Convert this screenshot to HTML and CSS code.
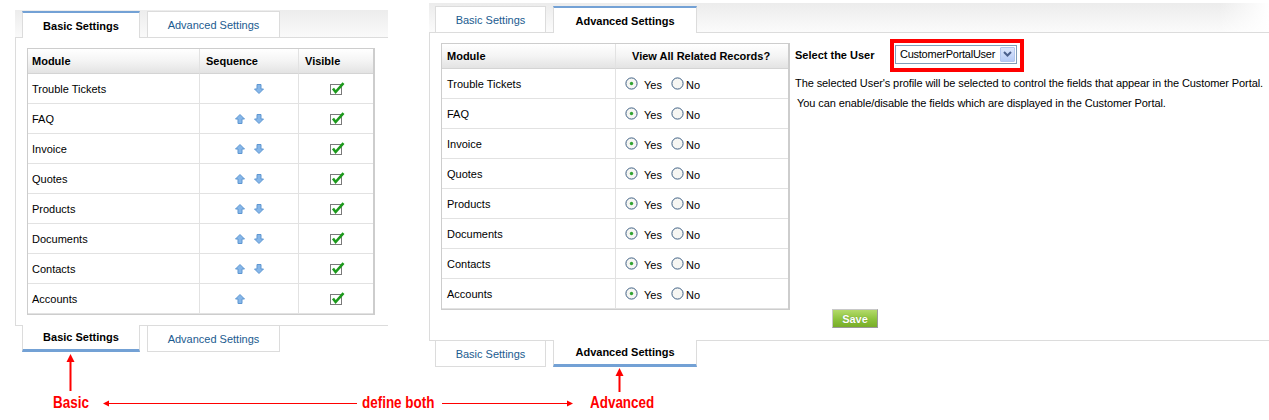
FILE: index.html
```html
<!DOCTYPE html>
<html lang="en">
<head>
<meta charset="utf-8">
<title>Customer Portal Settings</title>
<link rel="stylesheet" href="styles.css">
</head>
<body>
<div class="page">
  <div class="modules">
    <!-- BASIC -->
    <section class="module module-basic">
      <div class="tabbar tabbar-basic">
        <div class="tab tab-on w118">Basic Settings</div>
        <div class="tab w133">Advanced Settings</div>
      </div>
      <div class="panel panel-basic">
        <div class="tbl tbl-basic">
          <div class="cell hcell">Module</div>
          <div class="cell hcell pad6">Sequence</div>
          <div class="cell hcell pad6 last">Visible</div>

          <div class="cell">Trouble Tickets</div>
          <div class="cell seq"><span class="ph"></span><svg class="arr" width="10" height="10" viewBox="0 0 10 10"><path d="M3 0.5H7V5H9.5L5 9.5L0.5 5H3Z" fill="#86b6e8" stroke="#5f97d2"/></svg></div>
          <div class="cell vis last"><svg width="15" height="13" viewBox="0 0 15 13"><rect x="0.5" y="2.5" width="11" height="10" fill="#fff" stroke="#7a7a7a"/><path d="M3 6.5L5.6 10L13.5 1.2" fill="none" stroke="#1c9a1c" stroke-width="2.6"/></svg></div>

          <div class="cell">FAQ</div>
          <div class="cell seq"><svg class="arr" width="10" height="10" viewBox="0 0 10 10"><path d="M3 9.5H7V5H9.5L5 0.5L0.5 5H3Z" fill="#86b6e8" stroke="#5f97d2"/></svg><svg class="arr" width="10" height="10" viewBox="0 0 10 10"><path d="M3 0.5H7V5H9.5L5 9.5L0.5 5H3Z" fill="#86b6e8" stroke="#5f97d2"/></svg></div>
          <div class="cell vis last"><svg width="15" height="13" viewBox="0 0 15 13"><rect x="0.5" y="2.5" width="11" height="10" fill="#fff" stroke="#7a7a7a"/><path d="M3 6.5L5.6 10L13.5 1.2" fill="none" stroke="#1c9a1c" stroke-width="2.6"/></svg></div>

          <div class="cell">Invoice</div>
          <div class="cell seq"><svg class="arr" width="10" height="10" viewBox="0 0 10 10"><path d="M3 9.5H7V5H9.5L5 0.5L0.5 5H3Z" fill="#86b6e8" stroke="#5f97d2"/></svg><svg class="arr" width="10" height="10" viewBox="0 0 10 10"><path d="M3 0.5H7V5H9.5L5 9.5L0.5 5H3Z" fill="#86b6e8" stroke="#5f97d2"/></svg></div>
          <div class="cell vis last"><svg width="15" height="13" viewBox="0 0 15 13"><rect x="0.5" y="2.5" width="11" height="10" fill="#fff" stroke="#7a7a7a"/><path d="M3 6.5L5.6 10L13.5 1.2" fill="none" stroke="#1c9a1c" stroke-width="2.6"/></svg></div>

          <div class="cell">Quotes</div>
          <div class="cell seq"><svg class="arr" width="10" height="10" viewBox="0 0 10 10"><path d="M3 9.5H7V5H9.5L5 0.5L0.5 5H3Z" fill="#86b6e8" stroke="#5f97d2"/></svg><svg class="arr" width="10" height="10" viewBox="0 0 10 10"><path d="M3 0.5H7V5H9.5L5 9.5L0.5 5H3Z" fill="#86b6e8" stroke="#5f97d2"/></svg></div>
          <div class="cell vis last"><svg width="15" height="13" viewBox="0 0 15 13"><rect x="0.5" y="2.5" width="11" height="10" fill="#fff" stroke="#7a7a7a"/><path d="M3 6.5L5.6 10L13.5 1.2" fill="none" stroke="#1c9a1c" stroke-width="2.6"/></svg></div>

          <div class="cell">Products</div>
          <div class="cell seq"><svg class="arr" width="10" height="10" viewBox="0 0 10 10"><path d="M3 9.5H7V5H9.5L5 0.5L0.5 5H3Z" fill="#86b6e8" stroke="#5f97d2"/></svg><svg class="arr" width="10" height="10" viewBox="0 0 10 10"><path d="M3 0.5H7V5H9.5L5 9.5L0.5 5H3Z" fill="#86b6e8" stroke="#5f97d2"/></svg></div>
          <div class="cell vis last"><svg width="15" height="13" viewBox="0 0 15 13"><rect x="0.5" y="2.5" width="11" height="10" fill="#fff" stroke="#7a7a7a"/><path d="M3 6.5L5.6 10L13.5 1.2" fill="none" stroke="#1c9a1c" stroke-width="2.6"/></svg></div>

          <div class="cell">Documents</div>
          <div class="cell seq"><svg class="arr" width="10" height="10" viewBox="0 0 10 10"><path d="M3 9.5H7V5H9.5L5 0.5L0.5 5H3Z" fill="#86b6e8" stroke="#5f97d2"/></svg><svg class="arr" width="10" height="10" viewBox="0 0 10 10"><path d="M3 0.5H7V5H9.5L5 9.5L0.5 5H3Z" fill="#86b6e8" stroke="#5f97d2"/></svg></div>
          <div class="cell vis last"><svg width="15" height="13" viewBox="0 0 15 13"><rect x="0.5" y="2.5" width="11" height="10" fill="#fff" stroke="#7a7a7a"/><path d="M3 6.5L5.6 10L13.5 1.2" fill="none" stroke="#1c9a1c" stroke-width="2.6"/></svg></div>

          <div class="cell">Contacts</div>
          <div class="cell seq"><svg class="arr" width="10" height="10" viewBox="0 0 10 10"><path d="M3 9.5H7V5H9.5L5 0.5L0.5 5H3Z" fill="#86b6e8" stroke="#5f97d2"/></svg><svg class="arr" width="10" height="10" viewBox="0 0 10 10"><path d="M3 0.5H7V5H9.5L5 9.5L0.5 5H3Z" fill="#86b6e8" stroke="#5f97d2"/></svg></div>
          <div class="cell vis last"><svg width="15" height="13" viewBox="0 0 15 13"><rect x="0.5" y="2.5" width="11" height="10" fill="#fff" stroke="#7a7a7a"/><path d="M3 6.5L5.6 10L13.5 1.2" fill="none" stroke="#1c9a1c" stroke-width="2.6"/></svg></div>

          <div class="cell">Accounts</div>
          <div class="cell seq"><svg class="arr" width="10" height="10" viewBox="0 0 10 10"><path d="M3 9.5H7V5H9.5L5 0.5L0.5 5H3Z" fill="#86b6e8" stroke="#5f97d2"/></svg></div>
          <div class="cell vis last"><svg width="15" height="13" viewBox="0 0 15 13"><rect x="0.5" y="2.5" width="11" height="10" fill="#fff" stroke="#7a7a7a"/><path d="M3 6.5L5.6 10L13.5 1.2" fill="none" stroke="#1c9a1c" stroke-width="2.6"/></svg></div>
        </div>
      </div>
      <div class="tabbar-foot">
        <div class="tab tab-on w118">Basic Settings</div>
        <div class="tab w133">Advanced Settings</div>
      </div>
      <svg class="pointer pointer-basic" width="9" height="37" viewBox="0 0 9 37"><path d="M4.5 0L8.5 8H0.5Z" fill="#f00"/><rect x="3.5" y="7" width="2" height="30" fill="#f00"/></svg>
    </section>

    <!-- ADVANCED -->
    <section class="module module-adv">
      <div class="tabbar tabbar-adv">
        <div class="tab w111">Basic Settings</div>
        <div class="tab tab-on w144">Advanced Settings</div>
      </div>
      <div class="panel panel-adv">
        <div class="tbl tbl-adv">
          <div class="cell hcell pad5">Module</div>
          <div class="cell hcell pad16 last">View All Related Records?</div>

          <div class="cell pad5">Trouble Tickets</div>
          <div class="cell opts last"><svg class="radio" width="13" height="13" viewBox="0 0 13 13"><circle cx="6.5" cy="6.5" r="5.6" fill="#f6f6f3" stroke="#3e5f83"/><circle cx="6.5" cy="6.5" r="1.7" fill="#32a332"/></svg><span class="yes">Yes</span><svg class="radio" width="13" height="13" viewBox="0 0 13 13"><circle cx="6.5" cy="6.5" r="5.6" fill="#f6f6f3" stroke="#3e5f83"/></svg><span class="no">No</span></div>

          <div class="cell pad5">FAQ</div>
          <div class="cell opts last"><svg class="radio" width="13" height="13" viewBox="0 0 13 13"><circle cx="6.5" cy="6.5" r="5.6" fill="#f6f6f3" stroke="#3e5f83"/><circle cx="6.5" cy="6.5" r="1.7" fill="#32a332"/></svg><span class="yes">Yes</span><svg class="radio" width="13" height="13" viewBox="0 0 13 13"><circle cx="6.5" cy="6.5" r="5.6" fill="#f6f6f3" stroke="#3e5f83"/></svg><span class="no">No</span></div>

          <div class="cell pad5">Invoice</div>
          <div class="cell opts last"><svg class="radio" width="13" height="13" viewBox="0 0 13 13"><circle cx="6.5" cy="6.5" r="5.6" fill="#f6f6f3" stroke="#3e5f83"/><circle cx="6.5" cy="6.5" r="1.7" fill="#32a332"/></svg><span class="yes">Yes</span><svg class="radio" width="13" height="13" viewBox="0 0 13 13"><circle cx="6.5" cy="6.5" r="5.6" fill="#f6f6f3" stroke="#3e5f83"/></svg><span class="no">No</span></div>

          <div class="cell pad5">Quotes</div>
          <div class="cell opts last"><svg class="radio" width="13" height="13" viewBox="0 0 13 13"><circle cx="6.5" cy="6.5" r="5.6" fill="#f6f6f3" stroke="#3e5f83"/><circle cx="6.5" cy="6.5" r="1.7" fill="#32a332"/></svg><span class="yes">Yes</span><svg class="radio" width="13" height="13" viewBox="0 0 13 13"><circle cx="6.5" cy="6.5" r="5.6" fill="#f6f6f3" stroke="#3e5f83"/></svg><span class="no">No</span></div>

          <div class="cell pad5">Products</div>
          <div class="cell opts last"><svg class="radio" width="13" height="13" viewBox="0 0 13 13"><circle cx="6.5" cy="6.5" r="5.6" fill="#f6f6f3" stroke="#3e5f83"/><circle cx="6.5" cy="6.5" r="1.7" fill="#32a332"/></svg><span class="yes">Yes</span><svg class="radio" width="13" height="13" viewBox="0 0 13 13"><circle cx="6.5" cy="6.5" r="5.6" fill="#f6f6f3" stroke="#3e5f83"/></svg><span class="no">No</span></div>

          <div class="cell pad5">Documents</div>
          <div class="cell opts last"><svg class="radio" width="13" height="13" viewBox="0 0 13 13"><circle cx="6.5" cy="6.5" r="5.6" fill="#f6f6f3" stroke="#3e5f83"/><circle cx="6.5" cy="6.5" r="1.7" fill="#32a332"/></svg><span class="yes">Yes</span><svg class="radio" width="13" height="13" viewBox="0 0 13 13"><circle cx="6.5" cy="6.5" r="5.6" fill="#f6f6f3" stroke="#3e5f83"/></svg><span class="no">No</span></div>

          <div class="cell pad5">Contacts</div>
          <div class="cell opts last"><svg class="radio" width="13" height="13" viewBox="0 0 13 13"><circle cx="6.5" cy="6.5" r="5.6" fill="#f6f6f3" stroke="#3e5f83"/><circle cx="6.5" cy="6.5" r="1.7" fill="#32a332"/></svg><span class="yes">Yes</span><svg class="radio" width="13" height="13" viewBox="0 0 13 13"><circle cx="6.5" cy="6.5" r="5.6" fill="#f6f6f3" stroke="#3e5f83"/></svg><span class="no">No</span></div>

          <div class="cell pad5">Accounts</div>
          <div class="cell opts last"><svg class="radio" width="13" height="13" viewBox="0 0 13 13"><circle cx="6.5" cy="6.5" r="5.6" fill="#f6f6f3" stroke="#3e5f83"/><circle cx="6.5" cy="6.5" r="1.7" fill="#32a332"/></svg><span class="yes">Yes</span><svg class="radio" width="13" height="13" viewBox="0 0 13 13"><circle cx="6.5" cy="6.5" r="5.6" fill="#f6f6f3" stroke="#3e5f83"/></svg><span class="no">No</span></div>
        </div>

        <div class="side">
          <div class="userrow">
            <span class="userlabel">Select the User</span>
            <div class="userbox">
              <div class="select">
                <span class="seltext">CustomerPortalUser</span>
                <span class="dropbtn"><svg width="9" height="6" viewBox="0 0 9 6"><path d="M1 1L4.5 4.5L8 1" fill="none" stroke="#4a5f8c" stroke-width="2"/></svg></span>
              </div>
            </div>
          </div>
          <p class="desc">The selected User's profile will be selected to control the fields that appear in the Customer Portal.</p>
          <p class="desc desc2">You can enable/disable the fields which are displayed in the Customer Portal.</p>
          <button class="save" type="button">Save</button>
        </div>
      </div>
      <div class="tabbar-foot tabbar-foot-adv">
        <div class="tab w111">Basic Settings</div>
        <div class="tab tab-on w144">Advanced Settings</div>
      </div>
      <svg class="pointer pointer-adv" width="9" height="24" viewBox="0 0 9 24"><path d="M4.5 0L8.5 8H0.5Z" fill="#f00"/><rect x="3.5" y="7" width="2" height="17" fill="#f00"/></svg>
    </section>
  </div>

  <div class="legend">
    <span class="lbl lbl-basic">Basic</span>
    <svg class="rule rule-l" width="254" height="7" viewBox="0 0 254 7"><path d="M0 3.5L6 0.5V6.5Z" fill="#f00"/><rect x="5" y="3" width="249" height="1" fill="#f00"/></svg>
    <span class="lbl lbl-both">define both</span>
    <svg class="rule rule-r" width="131" height="7" viewBox="0 0 131 7"><rect x="0" y="3" width="126" height="1" fill="#f00"/><path d="M131 3.5L125 0.5V6.5Z" fill="#f00"/></svg>
    <span class="lbl lbl-adv">Advanced</span>
  </div>
</div>
</body>
</html>
```

FILE: styles.css
```css
* { box-sizing: border-box; }

body {
  margin: 0;
  background: #fff;
  color: #000;
  font: 11px "Liberation Sans", Arial, sans-serif;
}

.page {
  width: 1269px;
  display: flex;
  flex-direction: column;
}

.modules {
  display: flex;
  align-items: flex-start;
}

.module-basic {
  margin-left: 15px;
  width: 373px;
}

.module-adv {
  margin-left: 41px;
  flex: 1;
}

/* ---------- tabs ---------- */
.tabbar {
  display: flex;
  align-items: flex-end;
  gap: 7px;
  border-bottom: 1px solid #dcdcdc;
}

.tabbar-basic {
  padding: 11px 0 0 7px;
  background: linear-gradient(to bottom, #fff 0, #fff 10px, #ececec 10px, #fafafa 37px);
}

.tabbar-adv {
  padding: 6px 0 0 6px;
  background:
    linear-gradient(to right, rgba(255,255,255,0) 94%, #fff 100%),
    linear-gradient(to bottom, #fff 0, #fff 3px, #ececec 3px, #fbfbfb 32px);
}

.tab {
  height: 26px;
  display: flex;
  align-items: center;
  justify-content: center;
  background: #fff;
  border: 1px solid #dcdcdc;
  color: #1b5b8f;
  white-space: nowrap;
}

.tabbar .tab { border-bottom: 0; }

.tab-on {
  color: #000;
  font-weight: bold;
}

.tabbar .tab-on {
  height: 27px;
  margin-bottom: -1px;
  border-top: 2px solid #73a1d5;
}

.w118 { width: 118px; }
.w133 { width: 133px; }
.w111 { width: 111px; }
.w144 { width: 144px; }

.tabbar-foot {
  display: flex;
  align-items: flex-start;
  gap: 7px;
  padding-left: 7px;
}

.tabbar-foot-adv { padding-left: 6px; }

.tabbar-foot .tab {
  border-top: 0;
  height: 26px;
}

.tabbar-foot .tab-on {
  height: 27px;
  margin-top: -1px;
  border-bottom: 3px solid #73a1d5;
}

/* ---------- panels ---------- */
.panel {
  border-left: 1px solid #dcdcdc;
  border-bottom: 1px solid #dcdcdc;
}

.panel-basic { padding: 10px 0 10px 11px; }

.panel-adv {
  padding: 10px 0 12px 11px;
  display: flex;
  align-items: flex-start;
}

/* ---------- tables ---------- */
.tbl {
  display: grid;
  border: 1px solid #cdcdcd;
  border-right-width: 2px;
}

.tbl-basic {
  width: 348px;
  grid-template-columns: 172px 99px 74px;
}

.tbl-adv {
  width: 349px;
  grid-template-columns: 174px 172px;
}

.cell {
  height: 30px;
  display: flex;
  align-items: center;
  padding-left: 4px;
  border-right: 1px solid #e2e2e2;
  border-bottom: 1px solid #e2e2e2;
  white-space: nowrap;
}

.cell.last { border-right: 0; }

.hcell {
  height: 25px;
  font-weight: bold;
  background: linear-gradient(to bottom, #ffffff 0%, #f4f4f4 50%, #e3e3e3 100%);
  border-bottom-color: #d4d4d4;
}

.pad5 { padding-left: 5px; }
.pad6 { padding-left: 6px; }
.pad16 { padding-left: 16px; }

.seq {
  padding-left: 35px;
  gap: 9px;
}

.ph {
  width: 10px;
  height: 10px;
}

.arr { display: block; }

.vis { padding-left: 31px; padding-bottom: 1px; }
.vis svg { display: block; }

.opts { padding-left: 9px; }
.radio { display: block; flex: none; }
.yes { margin-left: 6px; margin-right: 9px; padding-top: 3px; }
.no { margin-left: 2px; padding-top: 3px; }

/* ---------- side ---------- */
.side {
  margin-left: 5px;
  margin-top: -5px;
  height: 290px;
  display: flex;
  flex-direction: column;
  flex: 1;
}

.userrow {
  display: flex;
  align-items: center;
  height: 34px;
}

.userlabel {
  width: 95px;
  font-weight: bold;
}

.userbox {
  border: 4px solid #f00;
  padding: 2px 3px 4px 1px;
}

.select {
  width: 122px;
  height: 19px;
  border: 1px solid #7f9db9;
  background: #fff;
  display: flex;
  align-items: center;
  justify-content: space-between;
  padding: 0 1px 0 4px;
}

.seltext { letter-spacing: -0.25px; }

.dropbtn {
  width: 15px;
  height: 15px;
  display: flex;
  align-items: center;
  justify-content: center;
  background: linear-gradient(to bottom, #dbe6fc 0%, #b6cbf6 100%);
  border: 1px solid #b2c6ee;
  border-radius: 1px;
}

.desc {
  margin: 4px 0 0;
  line-height: 14px;
  white-space: nowrap;
  letter-spacing: -0.09px;
}

.desc2 {
  margin-top: 6px;
  padding-left: 2px;
}

.save {
  margin-top: auto;
  margin-left: 37px;
  width: 46px;
  height: 19px;
  padding: 0;
  font: bold 11px "Liberation Sans", Arial, sans-serif;
  color: #fff;
  text-shadow: 0 0 1px #5a8a1a;
  background: linear-gradient(to bottom, #b3da6a 0%, #8cc23c 55%, #78ad28 100%);
  border: 1px solid #c8c8c8;
  border-right-color: #9a9a9a;
  border-bottom-color: #9a9a9a;
}

/* ---------- annotations ---------- */
.pointer { display: block; }
.pointer-basic { margin: 2px 0 0 51px; }
.pointer-adv { margin: 1px 0 0 186px; }

.legend {
  display: flex;
  align-items: center;
  height: 14px;
  margin-top: 4px;
  padding-left: 53px;
  color: #f00;
  font: bold 16px "Liberation Sans", Arial, sans-serif;
  white-space: nowrap;
}

.rule { display: block; flex: none; }

.lbl {
  display: block;
  flex: none;
  line-height: 14px;
  transform: scaleX(0.84);
  transform-origin: left center;
}

.lbl-basic { width: 35px; }
.rule-l { margin-left: 15px; }
.lbl-both { margin-left: 5px; width: 73px; }
.rule-r { margin-left: 7px; }
.lbl-adv { margin-left: 17px; width: 64px; }
```
